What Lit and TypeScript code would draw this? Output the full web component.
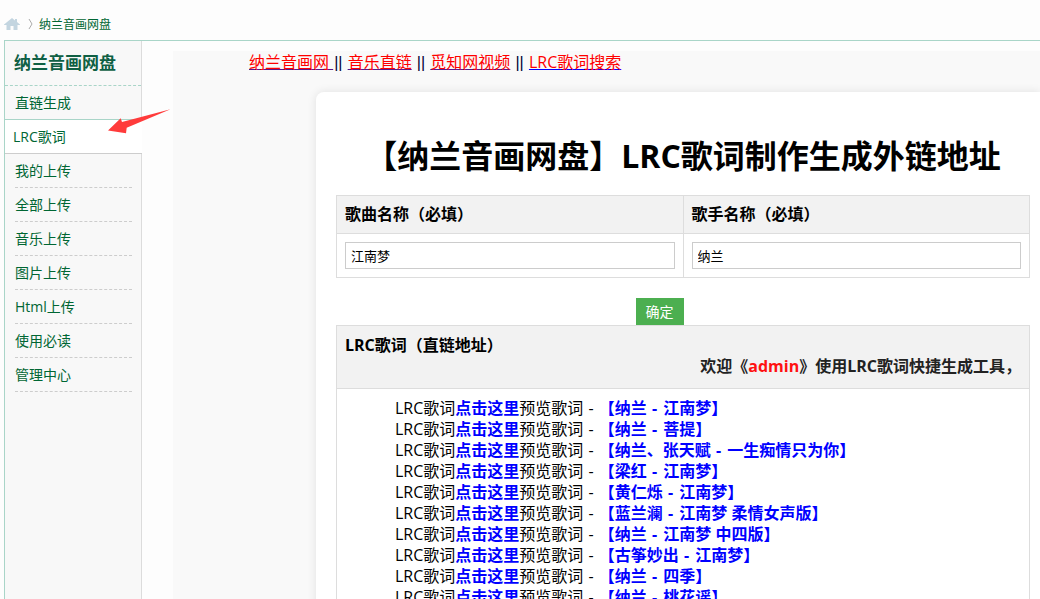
import { LitElement, html, css } from "lit";
import { customElement, state } from "lit/decorators.js";

const MENU = ["直链生成", "LRC歌词", "我的上传", "全部上传", "音乐上传", "图片上传", "Html上传", "使用必读", "管理中心"];

const SONGS: [string, string][] = [
  ["纳兰", "江南梦"],
  ["纳兰", "菩提"],
  ["纳兰、张天赋", "一生痴情只为你"],
  ["梁红", "江南梦"],
  ["黄仁烁", "江南梦"],
  ["蓝兰澜", "江南梦 柔情女声版"],
  ["纳兰", "江南梦 中四版"],
  ["古筝妙出", "江南梦"],
  ["纳兰", "四季"],
  ["纳兰", "桃花谣"],
];

@customElement("side-menu")
export class SideMenu extends LitElement {
  @state() private active = 1;

  static styles = css`
    :host { display: block; position: relative; width: 138px; flex: none; box-sizing: border-box; }
    .panel { box-sizing: border-box; height: 100%; border-left: 1px solid #a9d5c8; border-right: 1px solid #dcdcdc; background: #f8f8f8; }
    .title { margin: 0; height: 44px; line-height: 43px; padding-left: 9px; font-size: 17px; font-weight: 700; border-bottom: 1px dashed #a9d5c8; color: #0f6044; }
    .list { list-style: none; margin: 0; padding: 0; }
    .item { height: 34px; padding: 0 9px 0 10px; }
    .link { display: block; box-sizing: border-box; height: 34px; line-height: 34px; font-size: 14px; color: #006633; text-decoration: none; border-bottom: 1px dashed #cdcdcd; }
    .before .link { border-bottom: 0; }
    .active { box-sizing: border-box; margin: -1px -1px 0 0; height: 35px; padding-left: 8px; border-top: 1px solid #a9d5c8; border-bottom: 1px solid #cdcdcd; background: #fff; }
    .active .link { height: 33px; border-bottom: 0; }
    .arrow { position: absolute; left: 104px; top: 67px; width: 64px; height: 28px; pointer-events: none; }
  `;

  render() {
    return html`
      <nav class="panel">
        <h2 class="title">纳兰音画网盘</h2>
        <ul class="list">
          ${MENU.map((label, i) => html`
            <li class="item ${i === this.active ? "active" : i === this.active - 1 ? "before" : ""}">
              <a class="link" href="#" @click=${(e: Event) => { e.preventDefault(); this.active = i; }}>${label}</a>
            </li>`)}
        </ul>
      </nav>
      <svg class="arrow" viewBox="0 0 64 28" aria-hidden="true">
        <path d="M0 22.500 L12.700 10.200 L14 14 L62.500 1.300 L18.700 19.800 L18 25.200 Z" fill="#ff3b3b" />
      </svg>
    `;
  }
}

@customElement("lyric-tool")
export class LyricTool extends LitElement {
  static styles = css`
    :host { display: block; }
    .card { margin-left: 143px; padding: 20px 10px 20px 20px; background: #fff; border-radius: 8px 0 0 0; box-shadow: 0 0 10px rgba(0, 0, 0, 0.1); }
    .heading { margin: 20px 0 16px; font-size: 32px; line-height: 47px; font-weight: 700; text-align: center; }
    .grid { width: 100%; border-collapse: collapse; table-layout: fixed; }
    .cell { border: 1px solid #ddd; padding: 8px; text-align: left; font-size: 16px; line-height: 21px; font-weight: 700; background: #f2f2f2; }
    .field { border: 1px solid #ddd; padding: 8px; line-height: 0; }
    .input { box-sizing: border-box; width: 100%; height: 27px; padding: 0 5px; border: 1px solid #ccc; border-radius: 0; font-family: inherit; font-size: 13px; color: #000; background: #fff; outline: none; }
    .actions { display: flex; justify-content: center; padding: 20px 47px 0 0; }
    .submit { margin: 0; height: 27px; padding: 0 10px; border: 0; background: #4caf50; color: #fff; font-family: inherit; font-size: 14px; line-height: 27px; cursor: pointer; }
    .head { padding-top: 9px; padding-bottom: 11px; }
    .welcome { display: block; text-align: right; color: #222; }
    .name { color: #f11; }
    .results { border: 1px solid #ddd; padding: 9px 8px 8px 58px; font-size: 16px; line-height: 21px; }
    .songs { list-style: none; margin: 0; padding: 0; }
    .song { height: 21px; white-space: nowrap; }
    .open { color: #00f; font-weight: 700; text-decoration: none; }
    .dash { padding: 0 1px; }
    .open .dash { padding: 0 2px 0 1px; }
  `;

  render() {
    return html`
      <section class="card">
        <h1 class="heading">【纳兰音画网盘】LRC歌词制作生成外链地址</h1>
        <form @submit=${(e: Event) => e.preventDefault()}>
          <table class="grid">
            <tr>
              <th class="cell"><label for="song">歌曲名称（必填）</label></th>
              <th class="cell"><label for="singer">歌手名称（必填）</label></th>
            </tr>
            <tr>
              <td class="field"><input class="input" id="song" type="text" value="江南梦" /></td>
              <td class="field"><input class="input" id="singer" type="text" value="纳兰" /></td>
            </tr>
          </table>
          <div class="actions"><button class="submit" type="submit">确定</button></div>
        </form>
        <table class="grid">
          <tr>
            <th class="cell head">LRC歌词（直链地址）
              <span class="welcome">欢迎《<span class="name">admin</span>》使用LRC歌词快捷生成工具，</span>
            </th>
          </tr>
          <tr>
            <td class="results">
              <ul class="songs">
                ${SONGS.map(([singer, title]) => html`
                  <li class="song">LRC歌词<a class="open" href="#">点击这里</a>预览歌词<span class="dash"> - </span><a class="open" href="#">【${singer}<span class="dash"> - </span>${title}】</a></li>`)}
              </ul>
            </td>
          </tr>
        </table>
      </section>
    `;
  }
}

@customElement("app-root")
export class AppRoot extends LitElement {
  static styles = css`
    :host { display: flex; flex-direction: column; height: 100vh; overflow: hidden; background: #fdfdfd; color: #000; font-family: "Open Sans", "Noto Sans CJK SC", sans-serif; }
    .crumbs { display: flex; align-items: center; height: 32px; padding: 8px 4px 0; flex: none; font-size: 12px; }
    .home { display: flex; width: 16px; height: 14px; }
    .chevron { width: 5px; height: 10px; margin: 0 6px 0 8px; }
    .crumb { color: #006633; text-decoration: none; }
    .body { display: flex; flex: 1; min-height: 0; margin-left: 4px; border-top: 1px solid #a9d5c8; }
    .main { flex: 1; min-width: 0; margin: 10px 0 0 31px; background: #f9f9f9; overflow: hidden; }
    .links { height: 41px; padding-left: 76px; font-size: 16px; line-height: 22px; white-space: nowrap; }
    .top { color: #f00; text-decoration: underline #551a8b; white-space: pre; }
    .top.fresh { text-decoration-color: #00f; }
    .bar { padding: 0 1px; color: #003; font-family: "Liberation Sans", sans-serif; }
  `;

  render() {
    return html`
      <nav class="crumbs">
        <a class="home" href="#" aria-label="首页">
          <svg width="16" height="14" viewBox="0 0 16 14"><path d="M8 1 L0 7.500 V8 H2.500 V13 H6.500 V9 H9.500 V13 H13.500 V8 H16 V7.500 L13 5 V2 H11 V3.400 Z" fill="#c3d5e0" /></svg>
        </a>
        <svg class="chevron" viewBox="0 0 5 10" aria-hidden="true"><path d="M1 0 L4 5 L1 10" fill="none" stroke="#aaa" /></svg>
        <a class="crumb" href="#">纳兰音画网盘</a>
      </nav>
      <div class="body">
        <side-menu></side-menu>
        <main class="main">
          <nav class="links">
            <a class="top" href="#">纳兰音画网 </a><span class="bar">||</span>
            <a class="top" href="#">音乐直链</a> <span class="bar">||</span>
            <a class="top" href="#">觅知网视频</a> <span class="bar">||</span>
            <a class="top fresh" href="#">LRC歌词搜索</a>
          </nav>
          <lyric-tool></lyric-tool>
        </main>
      </div>
    `;
  }
}
